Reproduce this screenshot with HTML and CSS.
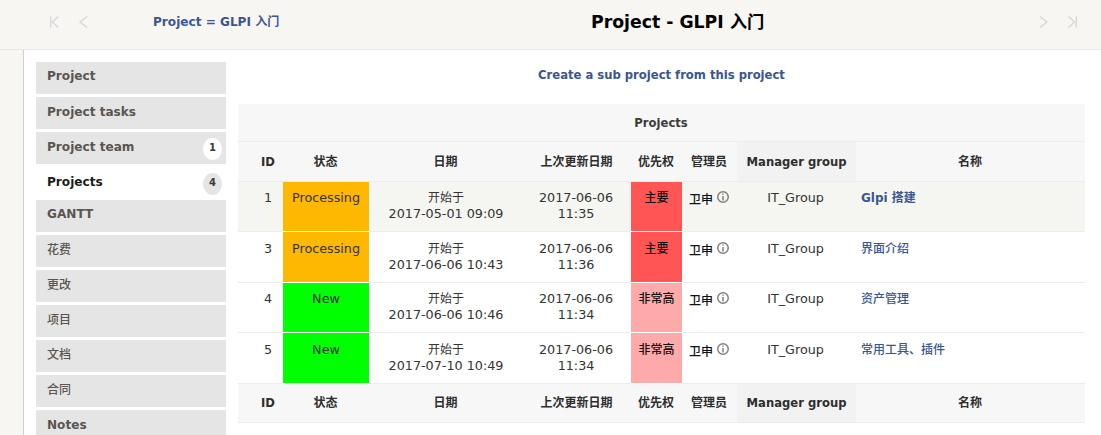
FILE: index.html
```html
<!DOCTYPE html>
<html lang="zh">
<head>
<meta charset="utf-8">
<title>Project - GLPI 入门</title>
<link rel="stylesheet" href="styles.css">
</head>
<body>
<header class="topbar">
  <div class="nav nav-left">
    <svg class="nav-icon" viewBox="0 0 9 12"><path d="M.7 .5v11M8.300 .5 2.500 6l5.800 5.500"/></svg>
    <svg class="nav-icon" viewBox="0 0 9 12"><path d="M8 .5 1 6l7 5.500"/></svg>
  </div>
  <a class="crumb" href="#">Project = GLPI 入门</a>
  <h1 class="page-title">Project - GLPI 入门</h1>
  <div class="nav nav-right">
    <svg class="nav-icon" viewBox="0 0 9 12"><path d="M1 .5 8 6l-7 5.500"/></svg>
    <svg class="nav-icon" viewBox="0 0 9 12"><path d="M8.300 .5v11M.7 .5 6.500 6l-5.800 5.500"/></svg>
  </div>
</header>
<div class="page">
  <nav class="tabs">
    <a class="tab tab-high" href="#">Project</a>
    <a class="tab" href="#">Project tasks</a>
    <a class="tab" href="#">Project team<span class="badge badge-light">1</span></a>
    <a class="tab tab-active" href="#">Projects<span class="badge">4</span></a>
    <a class="tab tab-high" href="#">GANTT</a>
    <a class="tab tab-cjk" href="#">花费</a>
    <a class="tab tab-cjk" href="#">更改</a>
    <a class="tab tab-cjk" href="#">项目</a>
    <a class="tab tab-cjk" href="#">文档</a>
    <a class="tab tab-cjk" href="#">合同</a>
    <a class="tab" href="#">Notes</a>
  </nav>
  <main class="content">
    <a class="create-link" href="#">Create a sub project from this project</a>
    <table class="grid">
      <colgroup>
        <col class="c-blank"><col class="c-id"><col class="c-status"><col class="c-date"><col class="c-update"><col class="c-prio"><col class="c-mgr"><col class="c-group"><col class="c-name">
      </colgroup>
      <thead>
        <tr class="title-row"><th colspan="9">Projects</th></tr>
        <tr class="head-row"><th></th><th>ID</th><th class="th-cjk">状态</th><th class="th-cjk">日期</th><th class="th-cjk">上次更新日期</th><th class="th-cjk">优先权</th><th class="th-cjk">管理员</th><th class="sorted">Manager group</th><th class="th-cjk">名称</th></tr>
      </thead>
      <tbody>
        <tr class="row row-hover">
          <td></td><td class="num">1</td><td class="st-proc">Processing</td><td class="date"><span class="cjk">开始于</span><br>2017-05-01 09:09</td><td class="mid">2017-06-06<br>11:35</td><td class="pr-major">主要</td><td class="mgr">卫申 <svg class="info" viewBox="0 0 14 14"><circle cx="7" cy="7" r="5.250"/><path d="M7 6v4.500M7 3.500v1.300"/></svg></td><td class="mid">IT_Group</td><td class="name"><a href="#" class="strong-link">Glpi 搭建</a></td>
        </tr>
        <tr class="row">
          <td></td><td class="num">3</td><td class="st-proc">Processing</td><td class="date"><span class="cjk">开始于</span><br>2017-06-06 10:43</td><td class="mid">2017-06-06<br>11:36</td><td class="pr-major">主要</td><td class="mgr">卫申 <svg class="info" viewBox="0 0 14 14"><circle cx="7" cy="7" r="5.250"/><path d="M7 6v4.500M7 3.500v1.300"/></svg></td><td class="mid">IT_Group</td><td class="name"><a href="#">界面介绍</a></td>
        </tr>
        <tr class="row">
          <td></td><td class="num">4</td><td class="st-new">New</td><td class="date"><span class="cjk">开始于</span><br>2017-06-06 10:46</td><td class="mid">2017-06-06<br>11:34</td><td class="pr-high">非常高</td><td class="mgr">卫申 <svg class="info" viewBox="0 0 14 14"><circle cx="7" cy="7" r="5.250"/><path d="M7 6v4.500M7 3.500v1.300"/></svg></td><td class="mid">IT_Group</td><td class="name"><a href="#">资产管理</a></td>
        </tr>
        <tr class="row">
          <td></td><td class="num">5</td><td class="st-new">New</td><td class="date"><span class="cjk">开始于</span><br>2017-07-10 10:49</td><td class="mid">2017-06-06<br>11:34</td><td class="pr-high">非常高</td><td class="mgr">卫申 <svg class="info" viewBox="0 0 14 14"><circle cx="7" cy="7" r="5.250"/><path d="M7 6v4.500M7 3.500v1.300"/></svg></td><td class="mid">IT_Group</td><td class="name"><a href="#">常用工具、插件</a></td>
        </tr>
      </tbody>
      <tfoot>
        <tr class="head-row"><th></th><th>ID</th><th class="th-cjk">状态</th><th class="th-cjk">日期</th><th class="th-cjk">上次更新日期</th><th class="th-cjk">优先权</th><th class="th-cjk">管理员</th><th class="sorted">Manager group</th><th class="th-cjk">名称</th></tr>
      </tfoot>
    </table>
  </main>
</div>
</body>
</html>
```
FILE: styles.css
```css
* { box-sizing: border-box; }
html, body { margin: 0; height: 435px; overflow: hidden; }
body {
  background: #f7f6f3;
  color: #2b2b2b;
  font: 12.750px/16px "DejaVu Sans", "Noto Sans CJK SC", sans-serif;
}
a { color: #3a5693; text-decoration: none; }
.topbar {
  height: 50px;
  display: grid;
  grid-template-columns: 153px 438px 1fr 62px;
  align-items: center;
  border-bottom: 1px solid #e9e8e5;
  padding-bottom: 5px;
}
.nav { display: flex; gap: 20px; align-items: center; }
.nav-left { padding-left: 50px; }
.nav-icon { width: 9px; height: 12px; fill: none; stroke: #d6d6d6; stroke-width: 1.300; }
.crumb { font-weight: bold; font-size: 12.100px; }
.page-title {
  margin: 0;
  font-size: 17.300px;
  line-height: 24px;
  font-weight: bold;
  color: #000;
}
.page {
  height: 385px;
  margin-left: 23px;
  background: #fff;
  border-left: 1px solid #cfcfcc;
  display: flex;
  align-items: flex-start;
  padding: 12px 16px 0 12px;
  gap: 12px;
}
.tabs { width: 190px; flex: none; display: flex; flex-direction: column; gap: 3px; }
.tab {
  height: 32px;
  background: #e5e5e5;
  color: #5a5550;
  font-weight: bold;
  font-size: 12.100px;
  padding: 7px 11px;
  position: relative;
}
.tab-high { padding-top: 6px; }
.tab-cjk { font-size: 12px; font-weight: 500; }
.tab-active { background: #fff; color: #1c1c1c; margin-bottom: -2px; }
.badge {
  position: absolute;
  right: 4px;
  top: 6px;
  width: 19px;
  height: 22px;
  border-radius: 50%;
  background: #e5e5e5;
  color: #3a3a3a;
  font-size: 10px;
  line-height: 20px;
  text-align: center;
}
.badge-light { background: #fff; }
.content { flex: 1; min-width: 0; display: flex; flex-direction: column; }
.create-link {
  font-weight: bold;
  font-size: 11.600px;
  text-align: center;
  height: 42px;
  padding-top: 5px;
}
.grid { width: 847px; table-layout: fixed; border-collapse: collapse; }
.c-blank { width: 15px; }
.c-id { width: 30px; }
.c-status { width: 86px; }
.c-date { width: 154px; }
.c-update { width: 108px; }
.c-prio { width: 51px; }
.c-mgr { width: 55px; }
.c-group { width: 119px; }
.c-name { width: 229px; }
.grid th { background: #f7f7f7; font-weight: bold; text-align: center; padding: 0; font-size: 11.600px; }
.grid th.th-cjk { font-size: 12px; padding-right: 1px; }
.title-row th { height: 37px; border-bottom: 1px solid #ececec; color: #3b3b3b; }
.grid .title-row th { padding-top: 1px; padding-right: 1px; }
.head-row th { height: 40px; border-bottom: 1px solid #ececec; color: #2e2e2e; }
.grid thead .head-row th { padding-top: 2px; }
tfoot .head-row th { height: 39px; }
.grid th.sorted { background: #f2f2f2; }
.row { height: 51px; border-bottom: 1px solid #ececec; }
.row:nth-child(odd) { height: 50px; }
.row td { vertical-align: top; padding: 8px 0 0; text-align: center; color: #333; }
.row:nth-child(even) td { padding-top: 9px; }
.row td.mid { padding-right: 2px; }
.row-hover td { background: #f5f6f1; }
.cjk { font-size: 12px; }
.row td.st-proc { background: #ffb800; border-bottom: 1px solid #fff; }
.row td.st-new { background: #00ff00; border-bottom: 1px solid #fff; }
.row td.pr-major { background: #ff5555; color: #111; border-bottom: 1px solid #fff; font-size: 12px; font-weight: 500; }
.row td.pr-high { background: #ffaaaa; color: #111; border-bottom: 1px solid #fff; font-size: 12px; font-weight: 500; }
.row td.mgr { text-align: left; padding-left: 7px; white-space: nowrap; color: #111; font-size: 12px; font-weight: 500; }
.row td.name { text-align: left; padding-left: 5px; font-size: 12px; font-weight: 500; }
.strong-link { font-weight: bold; }
.info { width: 14px; height: 14px; vertical-align: 0; margin-left: -1px; fill: none; stroke: #808080; stroke-width: 1.500; }
```
